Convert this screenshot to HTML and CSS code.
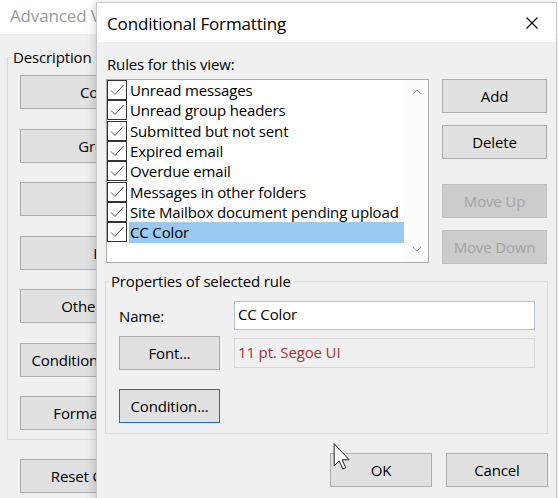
FILE: index.html
```html
<!DOCTYPE html>
<html lang="en">
<head>
<meta charset="utf-8">
<title>Conditional Formatting</title>
<link rel="stylesheet" href="styles.css">
</head>
<body>
<div class="screen">
  <div class="bgwin">
    <div class="bg-title">Advanced View Settings: Compact</div>
    <div class="bg-body">
      <fieldset class="bg-group">
        <legend>Description</legend>
        <div class="bg-btns">
          <div class="btn bg-btn">Columns...</div>
          <div class="btn bg-btn">Group By...</div>
          <div class="btn bg-btn">Sort...</div>
          <div class="btn bg-btn">Filter...</div>
          <div class="btn bg-btn">Other Settings...</div>
          <div class="btn bg-btn">Conditional Formatting...</div>
          <div class="btn bg-btn">Format Columns...</div>
        </div>
      </fieldset>
      <div class="btn bg-btn bg-reset">Reset Current View</div>
    </div>
  </div>

  <div class="dialog">
    <div class="dlg-title">
      <span>Conditional Formatting</span>
      <svg class="close" width="14" height="14" viewBox="0 0 14 14"><path d="M1.5 1.5 L12.5 12.5 M12.5 1.5 L1.5 12.5" stroke="#111" stroke-width="1.3" fill="none"/></svg>
    </div>
    <div class="dlg-body">
      <div class="rules-label">Rules for this view:</div>
      <div class="top-row">
        <div class="listbox">
          <div class="items">
            <div class="item"><span class="cb"><svg viewBox="0 0 18 18" width="18" height="18"><path d="M3 9.5 L7 13.5 L15.5 4" stroke="#555" stroke-width="1" fill="none"/></svg></span><span class="lbl">Unread messages</span></div>
            <div class="item"><span class="cb"><svg viewBox="0 0 18 18" width="18" height="18"><path d="M3 9.5 L7 13.5 L15.5 4" stroke="#555" stroke-width="1" fill="none"/></svg></span><span class="lbl">Unread group headers</span></div>
            <div class="item"><span class="cb"><svg viewBox="0 0 18 18" width="18" height="18"><path d="M3 9.5 L7 13.5 L15.5 4" stroke="#555" stroke-width="1" fill="none"/></svg></span><span class="lbl">Submitted but not sent</span></div>
            <div class="item"><span class="cb"><svg viewBox="0 0 18 18" width="18" height="18"><path d="M3 9.5 L7 13.5 L15.5 4" stroke="#555" stroke-width="1" fill="none"/></svg></span><span class="lbl">Expired email</span></div>
            <div class="item"><span class="cb"><svg viewBox="0 0 18 18" width="18" height="18"><path d="M3 9.5 L7 13.5 L15.5 4" stroke="#555" stroke-width="1" fill="none"/></svg></span><span class="lbl">Overdue email</span></div>
            <div class="item"><span class="cb"><svg viewBox="0 0 18 18" width="18" height="18"><path d="M3 9.5 L7 13.5 L15.5 4" stroke="#555" stroke-width="1" fill="none"/></svg></span><span class="lbl">Messages in other folders</span></div>
            <div class="item"><span class="cb"><svg viewBox="0 0 18 18" width="18" height="18"><path d="M3 9.5 L7 13.5 L15.5 4" stroke="#555" stroke-width="1" fill="none"/></svg></span><span class="lbl">Site Mailbox document pending upload</span></div>
            <div class="item selected"><span class="cb"><svg viewBox="0 0 18 18" width="18" height="18"><path d="M3 9.5 L7 13.5 L15.5 4" stroke="#555" stroke-width="1" fill="none"/></svg></span><span class="lbl">CC Color</span></div>
          </div>
          <div class="scrollbar">
            <svg width="10" height="6" viewBox="0 0 10 6"><path d="M1 5 L5 1 L9 5" stroke="#a6a6a6" stroke-width="1" fill="none"/></svg>
            <svg width="10" height="6" viewBox="0 0 10 6"><path d="M1 1 L5 5 L9 1" stroke="#a6a6a6" stroke-width="1" fill="none"/></svg>
          </div>
        </div>
        <div class="side-btns">
          <div class="btn">Add</div>
          <div class="btn">Delete</div>
          <div class="btn disabled gap-big">Move Up</div>
          <div class="btn disabled">Move Down</div>
        </div>
      </div>

      <fieldset class="props">
        <legend>Properties of selected rule</legend>
        <div class="props-grid">
          <div class="name-lbl">Name:</div>
          <div class="input">CC Color</div>
          <div class="btn">Font...</div>
          <div class="font-field">11 pt. Segoe UI</div>
          <div class="btn focused cond">Condition...</div>
        </div>
      </fieldset>

      <div class="footer">
        <div class="btn foot-btn">OK</div>
        <div class="btn foot-btn">Cancel</div>
      </div>
    </div>
  </div>

  <svg class="cursor" width="18" height="27" viewBox="0 0 12 19"><path d="M0.5 0.5 L0.5 16 L4 12.6 L6.6 18.3 L8.6 17.4 L6.1 11.8 L11 11.8 Z" fill="#fff" stroke="#222" stroke-width="0.7" stroke-linejoin="round"/></svg>
</div>
</body>
</html>
```

FILE: styles.css
```css
* { box-sizing: border-box; }
html, body { margin: 0; padding: 0; }
body {
  width: 558px;
  height: 498px;
  overflow: hidden;
  background: #f0f0f0;
  font-family: "Open Sans", "Noto Sans", sans-serif;
  font-size: 15px;
  letter-spacing: -0.15px;
  color: #000;
}
.screen {
  position: relative;
  width: 558px;
  height: 498px;
  overflow: hidden;
}

/* background window */
.bgwin { width: 558px; height: 498px; }
.bg-title {
  height: 34px;
  background: #fff;
  color: #9a9a9a;
  font-size: 17px;
  line-height: 32px;
  padding-left: 10px;
  white-space: nowrap;
}
.bg-body { padding-top: 13px; }
.bg-group {
  margin: 0 0 0 7px;
  width: 320px;
  padding: 8px 12px 9px 12px;
  border: 1px solid #dcdcdc;
}
.bg-group legend {
  padding: 0 3px;
  margin-left: -10px;
  line-height: 20px;
}
.bg-btns {
  display: flex;
  flex-direction: column;
  gap: 19.5px;
}
.btn {
  height: 34px;
  background: #e1e1e1;
  border: 1px solid #adadad;
  display: flex;
  align-items: center;
  justify-content: center;
  white-space: nowrap;
  line-height: 20px;
}
.bg-btn { width: 192px; }
.bg-reset { margin: 19px 0 0 20px; }

/* dialog */
.dialog {
  position: absolute;
  left: 96px;
  top: 2px;
  width: 461px;
  height: 510px;
  background: #f0f0f0;
  border: 1px solid #c8c8c8;
  box-shadow: -3px 0 7px rgba(0, 0, 0, 0.13);
}
.dlg-title {
  height: 39px;
  background: #fff;
  display: flex;
  align-items: center;
  justify-content: space-between;
  padding: 1px 17px 0 10px;
  font-size: 17px;
}
.close { display: block; margin-top: -1px; }
.dlg-body { padding: 12px 8px 0 9px; }
.rules-label { line-height: 20px; padding-left: 1px; margin-bottom: 5px; }

.top-row { display: flex; gap: 13px; }
.listbox {
  width: 323px;
  height: 184px;
  background: #fff;
  border: 1px solid #ababab;
  display: flex;
}
.items { flex: 1; }
.item {
  height: 20.3px;
  display: flex;
  align-items: center;
}
.cb {
  width: 20px;
  height: 20px;
  border: 1px solid #333;
  display: flex;
  align-items: center;
  justify-content: center;
  flex: none;
  background: #fff;
}
.cb svg { display: block; }
.lbl {
  margin-left: 2px;
  padding-left: 1px;
  line-height: 20px;
  white-space: nowrap;
}
.item.selected .lbl {
  flex: 1;
  background: #99c9ef;
  height: 21px;
  line-height: 21px;
}
.scrollbar {
  width: 24px;
  flex: none;
  background: #fcfcfc;
  display: flex;
  flex-direction: column;
  justify-content: space-between;
  align-items: center;
  padding: 9px 0 10px 2px;
}
.scrollbar svg { display: block; }

.side-btns {
  width: 105px;
  display: flex;
  flex-direction: column;
  gap: 12px;
}
.side-btns .btn { height: 34px; }
.side-btns .gap-big { margin-top: 13px; }
.btn.disabled {
  background: #cccccc;
  border-color: #bfbfbf;
  color: #a3a3a3;
}

/* properties */
.props {
  margin: 7px 0 0 -1px;
  padding: 0;
  border: 1px solid #dcdcdc;
  min-width: 0;
}
.props legend {
  margin-left: 3px;
  padding: 0 2px;
  line-height: 20px;
}
.props-grid {
  display: grid;
  grid-template-columns: 101px 301px;
  column-gap: 14px;
  grid-template-rows: 29px 34px 47px;
  row-gap: 6px;
  padding: 10px 0 10px 13px;
  align-items: center;
}
.input {
  height: 29px;
  background: #fff;
  border: 1px solid #b6bfcf;
  padding-left: 3px;
  line-height: 25px;
}
.font-field {
  height: 30px;
  background: #f0f0f0;
  border: 1px solid #d6d6d6;
  color: #9e3730;
  padding-left: 3px;
  line-height: 26px;
}
.cond { align-self: end; grid-column: 1; }
.btn.focused { border-color: #0078d7; }

.footer {
  display: flex;
  justify-content: flex-end;
  gap: 14px;
  margin-top: 19px;
}
.foot-btn { width: 102px; }

.cursor {
  position: absolute;
  left: 333px;
  top: 443px;
}
```
